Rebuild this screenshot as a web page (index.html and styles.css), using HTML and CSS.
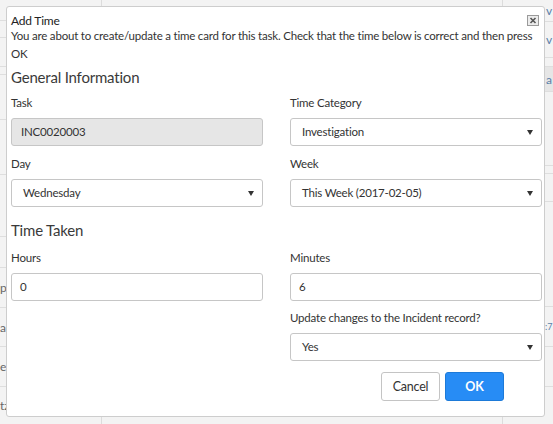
FILE: index.html
```html
<!DOCTYPE html>
<html>
<head>
<meta charset="utf-8">
<link rel="stylesheet" href="styles.css">
</head>
<body>
<div class="page">
  <div class="bg-col bg-left">
    <div class="bg-row" style="height:21px"></div>
    <div class="bg-row" style="height:17px"></div>
    <div class="bg-row" style="height:29px"></div>
    <div class="bg-row" style="height:8px"></div>
    <div class="bg-row" style="height:45px"></div>
    <div class="bg-row" style="height:55px"></div>
    <div class="bg-row" style="height:62px"></div>
    <div class="bg-row" style="height:31px"></div>
    <div class="bg-row" style="height:40px"><span class="frag">p</span></div>
    <div class="bg-row" style="height:39px"><span class="frag">ai</span></div>
    <div class="bg-row" style="height:40px"><span class="frag">ec</span></div>
    <div class="bg-row last" style="height:37px"><span class="frag">tz</span></div>
  </div>
  <div class="bg-col bg-mid"></div>
  <div class="bg-col bg-right">
    <div class="bg-row" style="height:22px"><span class="rfrag">v</span></div>
    <div class="bg-row" style="height:36px"><span class="rfrag">v</span></div>
    <div class="bg-row" style="height:9px"></div>
    <div class="bg-row grey" style="height:25px"><span class="rfrag">a</span></div>
    <div class="bg-row" style="height:74px"></div>
    <div class="bg-row" style="height:8px"></div>
    <div class="bg-row" style="height:28px"></div>
    <div class="bg-row" style="height:105px"></div>
    <div class="bg-row" style="height:40px"><span class="rfrag small">:7</span></div>
    <div class="bg-row" style="height:40px"></div>
    <div class="bg-row last" style="height:37px"></div>
  </div>
</div>

<div class="modal">
  <div class="modal-header">
    <div class="modal-title">Add Time</div>
    <button class="close-btn" aria-label="Close">
      <svg width="12" height="11" viewBox="0 0 12 11">
        <rect x="0.5" y="0.5" width="11" height="10" fill="#ececec" stroke="#9a9a9a"/>
        <path d="M3.5 3 L8.5 8 M8.5 3 L3.5 8" stroke="#555" stroke-width="1.6"/>
      </svg>
    </button>
  </div>
  <p class="desc">You are about to create/update a time card for this task. Check that the time below is correct and then press OK</p>

  <h2 class="section-title">General Information</h2>
  <div class="grid">
    <div class="field">
      <div class="label">Task</div>
      <div class="control readonly">INC0020003</div>
    </div>
    <div class="field">
      <div class="label">Time Category</div>
      <div class="control select">Investigation<span class="caret"></span></div>
    </div>
    <div class="field">
      <div class="label">Day</div>
      <div class="control select">Wednesday<span class="caret"></span></div>
    </div>
    <div class="field">
      <div class="label">Week</div>
      <div class="control select">This Week (2017-02-05)<span class="caret"></span></div>
    </div>
  </div>

  <h2 class="section-title second">Time Taken</h2>
  <div class="grid grid-time">
    <div class="field">
      <div class="label">Hours</div>
      <div class="control">0</div>
    </div>
    <div class="field">
      <div class="label">Minutes</div>
      <div class="control">6</div>
    </div>
    <div class="field"></div>
    <div class="field">
      <div class="label">Update changes to the Incident record?</div>
      <div class="control select">Yes<span class="caret"></span></div>
    </div>
  </div>

  <div class="actions">
    <button class="btn btn-default">Cancel</button>
    <button class="btn btn-primary">OK</button>
  </div>
</div>
</body>
</html>
```
FILE: styles.css
```css
* { box-sizing: border-box; }
html, body { margin: 0; padding: 0; }
body {
  width: 553px;
  height: 424px;
  overflow: hidden;
  background: #f3f3f3;
  font-family: Lato, "Liberation Sans", sans-serif;
  color: #333;
  position: relative;
}
.page {
  display: flex;
  height: 424px;
}
.bg-col { display: flex; flex-direction: column; }
.bg-left { width: 102px; border-right: 1px solid #dcdcdc; }
.bg-mid { flex: 1; }
.bg-right { width: 51px; border-left: 1px solid #dcdcdc; }
.bg-row {
  border-bottom: 1px solid #dedede;
  display: flex;
  align-items: center;
  font-size: 12px;
  color: #666;
  flex-shrink: 0;
  white-space: nowrap;
}
.bg-row.grey { background: #e6e6e6; }
.bg-row.last { border-bottom: none; }
.frag { padding-left: 0; }
.rfrag { padding-left: 43px; color: #5a7fa8; }
.rfrag.small { padding-left: 42px; font-size: 9px; }

.modal {
  position: absolute;
  left: 6px;
  top: 6px;
  width: 539px;
  height: 411px;
  background: #fff;
  border: 1px solid #cdcdcd;
  border-radius: 3px;
  padding: 7px 3px 0 4px;
  letter-spacing: -0.2px;
}
.modal-header {
  display: flex;
  justify-content: space-between;
  align-items: flex-start;
}
.modal-title {
  font-size: 12px;
  line-height: 14px;
  color: #222;
  letter-spacing: -0.2px;
}
.close-btn {
  border: none;
  background: none;
  padding: 0;
  margin: 1px 2px 0 0;
  width: 12px;
  height: 11px;
  display: block;
}
.close-btn svg { display: block; }
.desc {
  margin: -1px 0 0;
  font-size: 11.5px;
  line-height: 18px;
  color: #333;
}
.section-title {
  margin: 3px 0 0;
  font-size: 15px;
  line-height: 22px;
  font-weight: 400;
  color: #3a3a3a;
}
.section-title.second { margin-top: 12px; }
.grid {
  display: grid;
  grid-template-columns: 252px 252px;
  column-gap: 27px;
  row-gap: 10px;
  margin-top: 7px;
}
.grid-time { margin-top: 9px; row-gap: 9px; }
.field { display: flex; flex-direction: column; }
.label {
  font-size: 11.5px;
  line-height: 16px;
  color: #333;
  margin-bottom: 7px;
  white-space: nowrap;
}
.control {
  height: 28px;
  border: 1px solid #c6c6c6;
  border-radius: 3px;
  background: #fff;
  font-size: 11.5px;
  line-height: 26px;
  padding: 0 8px;
  color: #333;
  position: relative;
}
.control.readonly {
  background: #e6e6e6;
  padding-left: 9px;
}
.control.select { padding-left: 11px; }
.caret {
  position: absolute;
  right: 8px;
  top: 11px;
  width: 0;
  height: 0;
  border-left: 3px solid transparent;
  border-right: 3px solid transparent;
  border-top: 5px solid #333;
}
.actions {
  display: flex;
  justify-content: flex-end;
  gap: 5px;
  margin-top: 11px;
  padding-right: 37px;
}
.btn {
  height: 29px;
  width: 59px;
  border-radius: 3px;
  font-family: Lato, "Liberation Sans", sans-serif;
  font-size: 12.5px;
  padding: 0;
  letter-spacing: -0.2px;
}
.btn-default {
  background: #fff;
  border: 1px solid #c4c4c4;
  color: #333;
}
.btn-primary {
  background: #278cf5;
  border: 1px solid #1d7ad8;
  color: #fff;
  font-weight: 700;
}
```
